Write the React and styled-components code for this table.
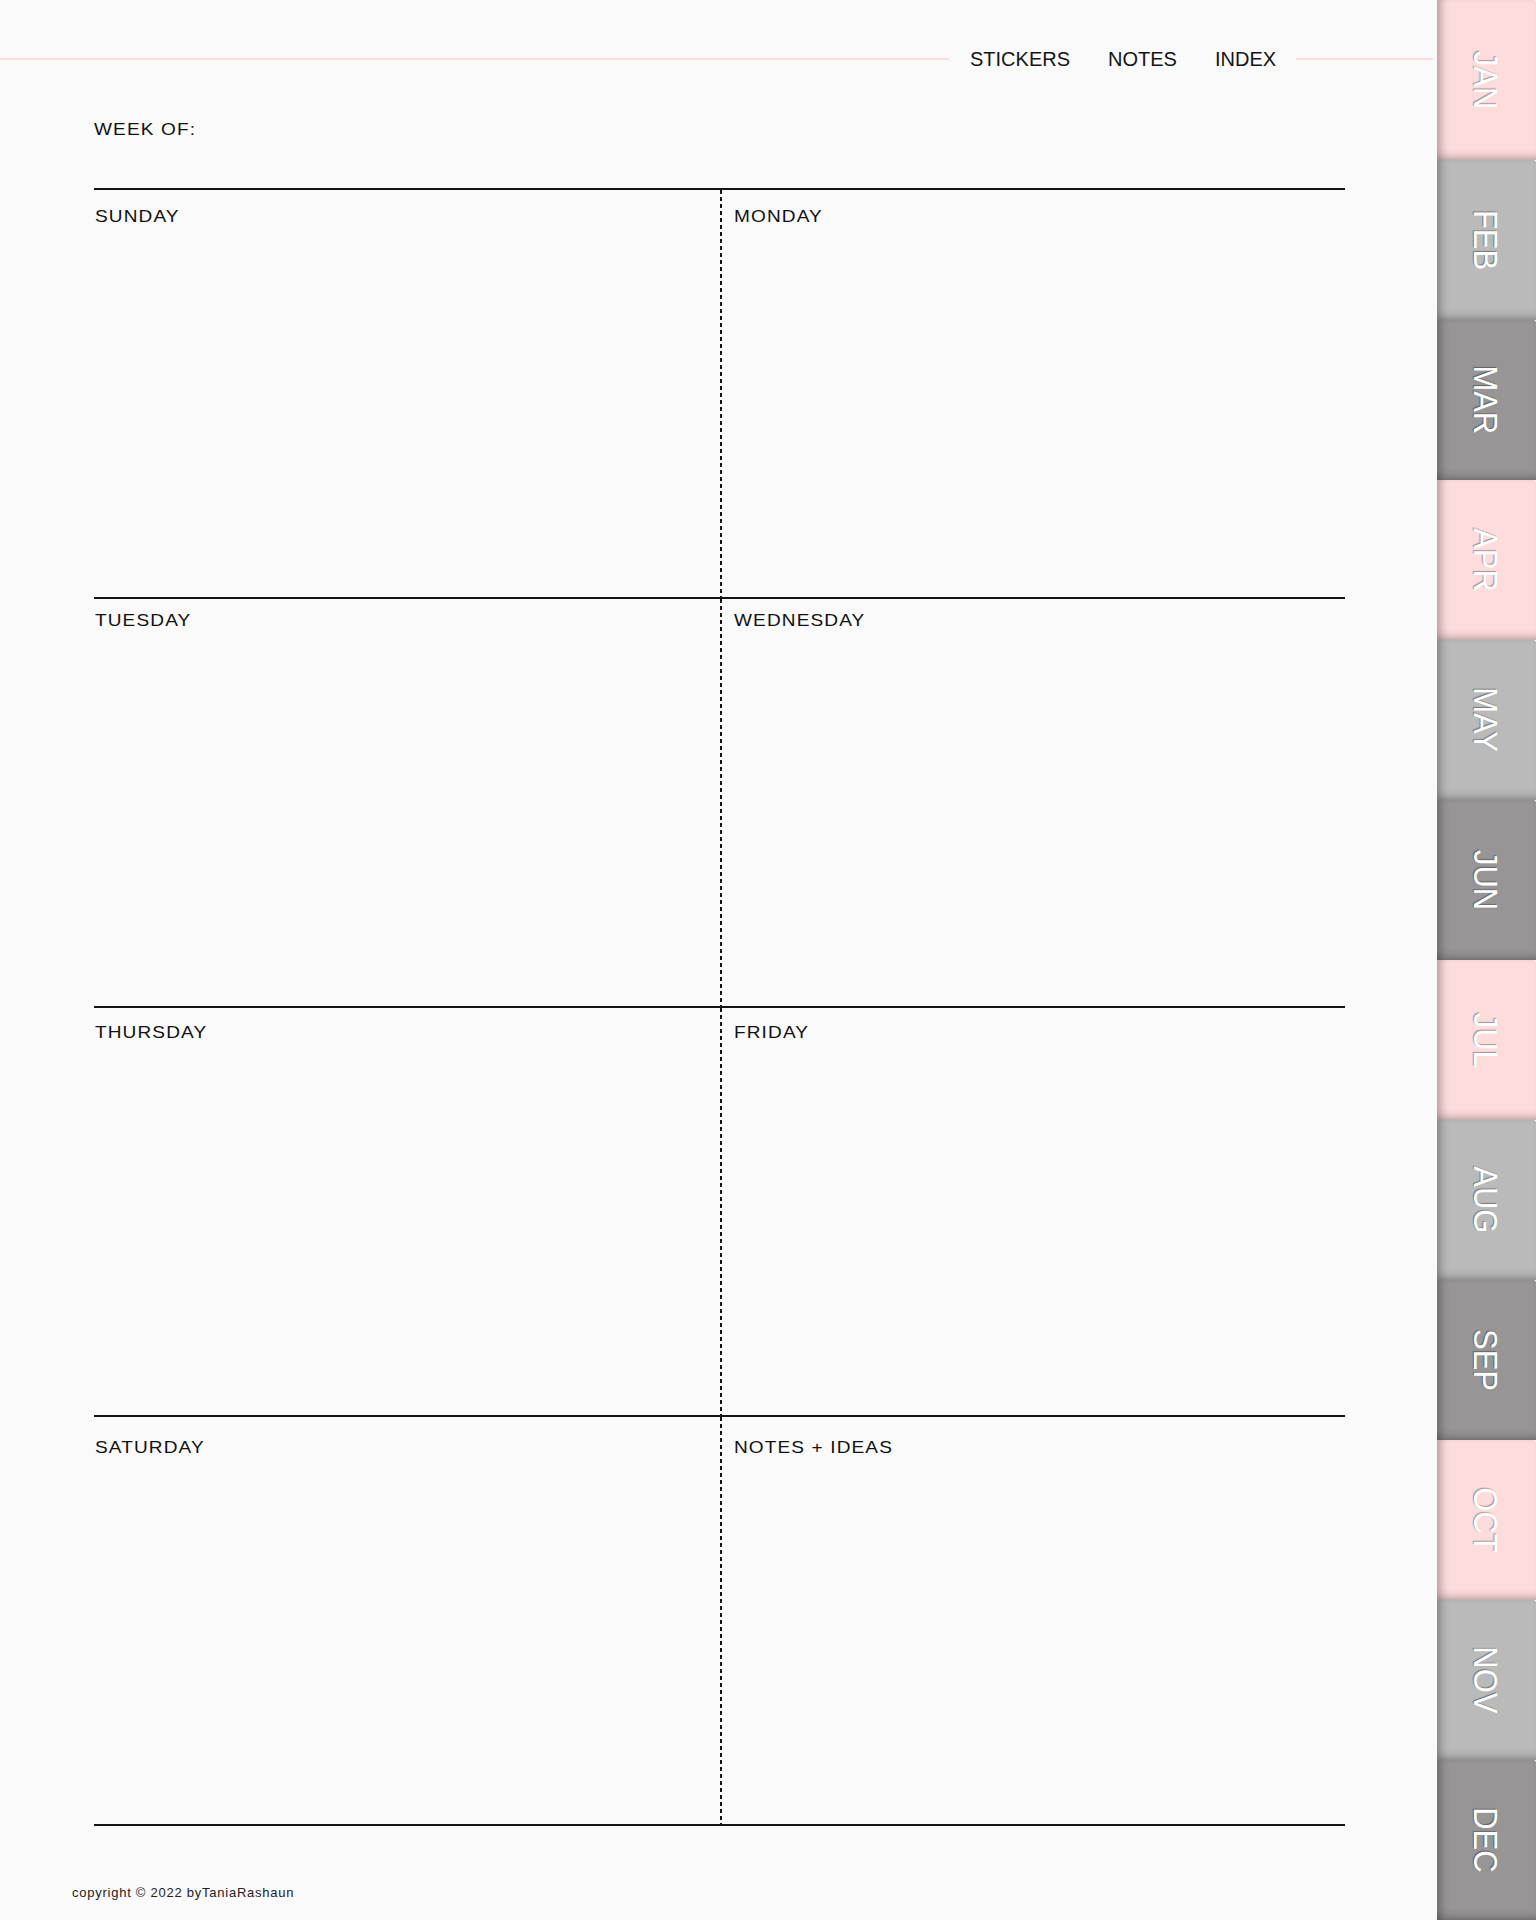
import React from "react";
import styled, { createGlobalStyle } from "styled-components";

const Global = createGlobalStyle`
  html, body { margin: 0; padding: 0; background: #fafafa; }
  body { font-family: "Liberation Sans", Arial, sans-serif; color: #111; }
`;

const Page = styled.div`
  display: flex;
  width: 1536px;
  height: 1920px;
  overflow: hidden;
  background: #fafafa;
`;

const Main = styled.div`
  width: 1437px;
  flex: 0 0 1437px;
  display: flex;
  flex-direction: column;
`;

const Header = styled.header`
  height: 118px;
  display: flex;
  align-items: center;
  padding-right: 4px;
`;

const Rule = styled.div`
  height: 2px;
  background: #fcdcdc;
  flex: ${(p) => (p.$w ? `0 0 ${p.$w}px` : "1")};
`;

const Nav = styled.nav`
  display: flex;
  gap: 38px;
  padding: 0 20px 0 21px;
`;

const NavLink = styled.span`
  font-size: 20px;
  color: #141414;
`;

const Wide = styled.span`
  display: inline-block;
  font-size: 17px;
  line-height: 20px;
  letter-spacing: 1px;
  color: #111;
  white-space: nowrap;
  transform: scaleX(1.12);
  transform-origin: left center;
`;

const WeekOf = styled.div`
  height: 70px;
  padding: 2px 0 0 94px;
  box-sizing: border-box;
`;

const Grid = styled.div`
  margin-left: 94px;
  width: 1251px;
  display: grid;
  grid-template-columns: 626px 625px;
  grid-auto-rows: 409px;
  border-bottom: 2px solid #141414;
`;

const Cell = styled.div`
  border-top: 2px solid #141414;
  box-sizing: border-box;
  padding: ${(p) => p.$top}px 0 0 1px;
  ${(p) =>
    p.$right &&
    `background-image: repeating-linear-gradient(to bottom, #111 0 4px, transparent 4px 7px);
     background-size: 2px 100%;
     background-repeat: no-repeat;
     background-position: 0 0;
     padding-left: 14px;`}
`;

const Copyright = styled.div`
  margin: 59px 0 0 72px;
  font-size: 13px;
  line-height: 16px;
  letter-spacing: 0.75px;
  color: #222;
`;

const Tabs = styled.div`
  width: 99px;
  flex: 0 0 99px;
  display: flex;
  flex-direction: column;
`;

const tabColors = {
  pink: "#fddcdc",
  light: "#bababa",
  dark: "#979595",
};

const Tab = styled.div`
  height: 160px;
  flex: 0 0 160px;
  background: ${(p) => tabColors[p.$tone]};
  display: flex;
  align-items: center;
  justify-content: center;
  box-shadow: inset 9px 0 8px -5px rgba(0, 0, 0, 0.28),
    inset 0 -9px 8px -6px rgba(0, 0, 0, 0.25);
  border-top-right-radius: 3px;
`;

const TabLabel = styled.span`
  writing-mode: vertical-rl;
  font-size: 34px;
  line-height: 1;
  color: #fff;
  text-shadow: -1px 1px 1px rgba(0, 0, 0, 0.35);
  margin-left: -2px;
  transform: scale(1, 0.91);
`;

const months = ["JAN", "FEB", "MAR", "APR", "MAY", "JUN", "JUL", "AUG", "SEP", "OCT", "NOV", "DEC"];
const tones = ["pink", "light", "dark"];

const days = [
  { l: "SUNDAY", r: "MONDAY", top: 17 },
  { l: "TUESDAY", r: "WEDNESDAY", top: 12 },
  { l: "THURSDAY", r: "FRIDAY", top: 15 },
  { l: "SATURDAY", r: "NOTES + IDEAS", top: 21 },
];

export default function App() {
  return (
    <>
      <Global />
      <Page>
        <Main>
          <Header>
            <Rule $w={949} />
            <Nav>
              <NavLink>STICKERS</NavLink>
              <NavLink>NOTES</NavLink>
              <NavLink>INDEX</NavLink>
            </Nav>
            <Rule />
          </Header>
          <WeekOf>
            <Wide>WEEK OF:</Wide>
          </WeekOf>
          <Grid>
            {days.map(({ l, r, top }) => (
              <React.Fragment key={l}>
                <Cell $top={top}>
                  <Wide>{l}</Wide>
                </Cell>
                <Cell $right $top={top}>
                  <Wide>{r}</Wide>
                </Cell>
              </React.Fragment>
            ))}
          </Grid>
          <Copyright>copyright © 2022 byTaniaRashaun</Copyright>
        </Main>
        <Tabs>
          {months.map((m, i) => (
            <Tab key={m} $tone={tones[i % 3]}>
              <TabLabel>{m}</TabLabel>
            </Tab>
          ))}
        </Tabs>
      </Page>
    </>
  );
}
